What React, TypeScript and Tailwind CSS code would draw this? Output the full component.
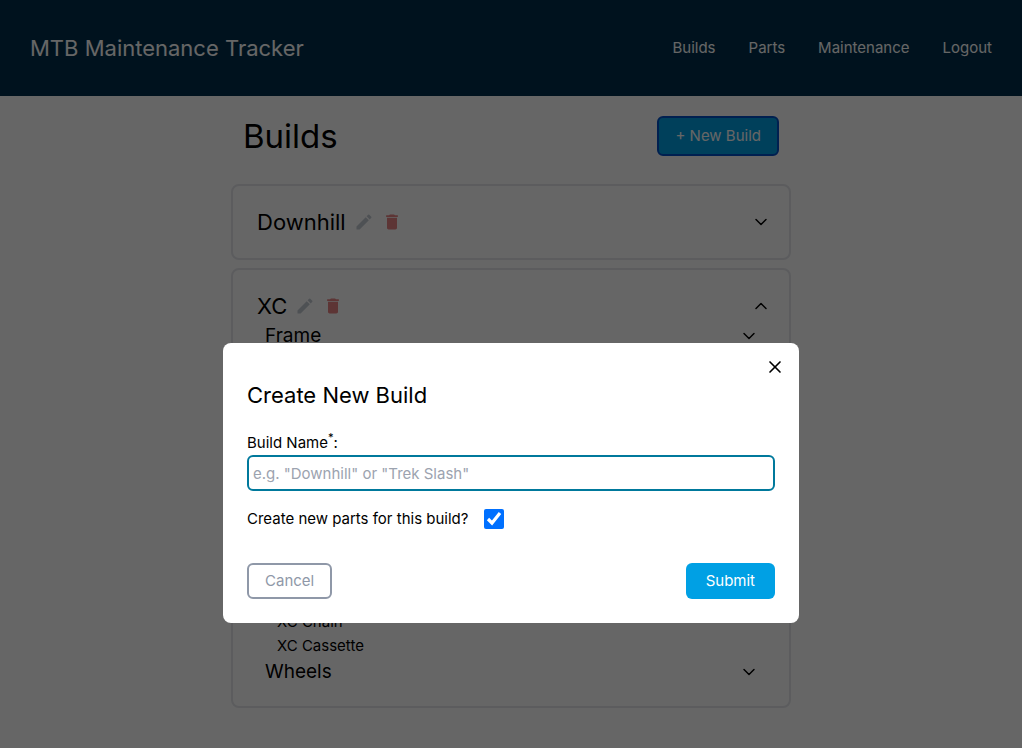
import { useState } from "react";
import { MdModeEdit, MdDelete } from "react-icons/md";
import { ChevronDown, ChevronUp, X } from "lucide-react";

type Section = { name: string; parts?: string[] };
type Build = { name: string; open: boolean; sections: Section[] };

const builds: Build[] = [
  { name: "Downhill", open: false, sections: [] },
  {
    name: "XC",
    open: true,
    sections: [
      { name: "Frame" },
      { name: "Suspension" },
      { name: "Brakes" },
      { name: "Cockpit" },
      { name: "Seat" },
      {
        name: "Drivetrain",
        parts: [
          "XC Shifter",
          "XC Derailleur",
          "XC Crankset",
          "XC Chainring",
          "XC Pedals",
          "XC Chain",
          "XC Cassette",
        ],
      },
      { name: "Wheels" },
    ],
  },
];

const links = ["Builds", "Parts", "Maintenance", "Logout"];

function Header() {
  return (
    <header className="flex h-24 items-center justify-between bg-[#002f4c] px-[30px] text-white">
      <p className="text-[22px] leading-8">MTB Maintenance Tracker</p>
      <nav className="flex gap-[33px]">
        {links.map((link) => (
          <a key={link} href="#">
            {link}
          </a>
        ))}
      </nav>
    </header>
  );
}

function Toggle({ open, label }: { open: boolean; label: string }) {
  const Icon = open ? ChevronUp : ChevronDown;
  return (
    <button type="button" aria-label={label} className="p-0.5">
      <Icon className="size-5" strokeWidth={1.75} />
    </button>
  );
}

function BuildCard({ build }: { build: Build }) {
  return (
    <section className="rounded-lg border-2 border-gray-200 py-5 pr-4 pl-6">
      <div className="flex h-8 items-center justify-between">
        <div className="flex items-center">
          <h2 className="text-[22px] leading-8">{build.name}</h2>
          <button type="button" aria-label={`Edit ${build.name}`} className="ml-2 text-[#c4cad3]">
            <MdModeEdit className="size-5" />
          </button>
          <button type="button" aria-label={`Delete ${build.name}`} className="ml-2 text-[#e88484]">
            <MdDelete className="size-5" />
          </button>
        </div>
        <Toggle open={build.open} label={`Toggle ${build.name}`} />
      </div>
      {build.open && (
        <div className="pr-3 pl-2">
          {build.sections.map((section) => (
            <div key={section.name}>
              <div className="flex h-7 items-center justify-between">
                <h3 className="text-[19px] leading-7">{section.name}</h3>
                <Toggle open={!!section.parts} label={`Toggle ${section.name}`} />
              </div>
              {section.parts && (
                <ul className="pl-3">
                  {section.parts.map((part) => (
                    <li key={part}>{part}</li>
                  ))}
                </ul>
              )}
            </div>
          ))}
        </div>
      )}
    </section>
  );
}

function NewBuildDialog() {
  const [name, setName] = useState("");
  const [createParts, setCreateParts] = useState(true);
  return (
    <div className="fixed inset-0 flex items-start justify-center overflow-hidden bg-black/60 pt-[343px]">
      <div
        role="dialog"
        aria-modal="true"
        aria-labelledby="dialog-title"
        className="w-full max-w-xl rounded-lg bg-white px-6 pt-3 pb-6"
      >
        <div className="-mr-3 flex justify-end">
          <button type="button" aria-label="Close" className="p-0.5">
            <X className="size-5" />
          </button>
        </div>
        <form onSubmit={(e) => e.preventDefault()}>
          <h2 id="dialog-title" className="text-[22px] leading-8">
            Create New Build
          </h2>
          <label htmlFor="build-name" className="mt-5 block leading-6">
            Build Name<sup>*</sup>:
          </label>
          <input
            id="build-name"
            type="text"
            value={name}
            onChange={(e) => setName(e.target.value)}
            placeholder={'e.g. "Downhill" or "Trek Slash"'}
            className="block h-9 w-full rounded-md border-2 border-[#00799c] px-1 outline-none placeholder:text-[#9ca3af]"
          />
          <div className="mt-4 flex items-center gap-4">
            <label htmlFor="create-parts">Create new parts for this build?</label>
            <input
              id="create-parts"
              type="checkbox"
              checked={createParts}
              onChange={(e) => setCreateParts(e.target.checked)}
              className="size-5 accent-[#0070ff]"
            />
          </div>
          <div className="mt-8 flex justify-between">
            <button
              type="button"
              className="h-9 rounded-md border-2 border-[#8f98a8] px-4 text-[#8f98a8]"
            >
              Cancel
            </button>
            <button type="submit" className="h-9 rounded-md bg-[#00a0e4] px-5 text-white">
              Submit
            </button>
          </div>
        </form>
      </div>
    </div>
  );
}

export default function App() {
  return (
    <div className="min-h-screen bg-white font-['Inter',sans-serif] text-[15px] leading-6 text-black">
      <Header />
      <main className="mx-auto max-w-xl px-2 pt-5 pb-10">
        <div className="flex items-center justify-between px-3">
          <h1 className="text-[33px] leading-10">Builds</h1>
          <button
            type="button"
            className="h-10 rounded-md border-2 border-[#0050c8] bg-[#00a0e4] px-4 text-white"
          >
            + New Build
          </button>
        </div>
        <div className="mt-7 flex flex-col gap-2">
          {builds.map((build) => (
            <BuildCard key={build.name} build={build} />
          ))}
        </div>
      </main>
      <NewBuildDialog />
    </div>
  );
}
